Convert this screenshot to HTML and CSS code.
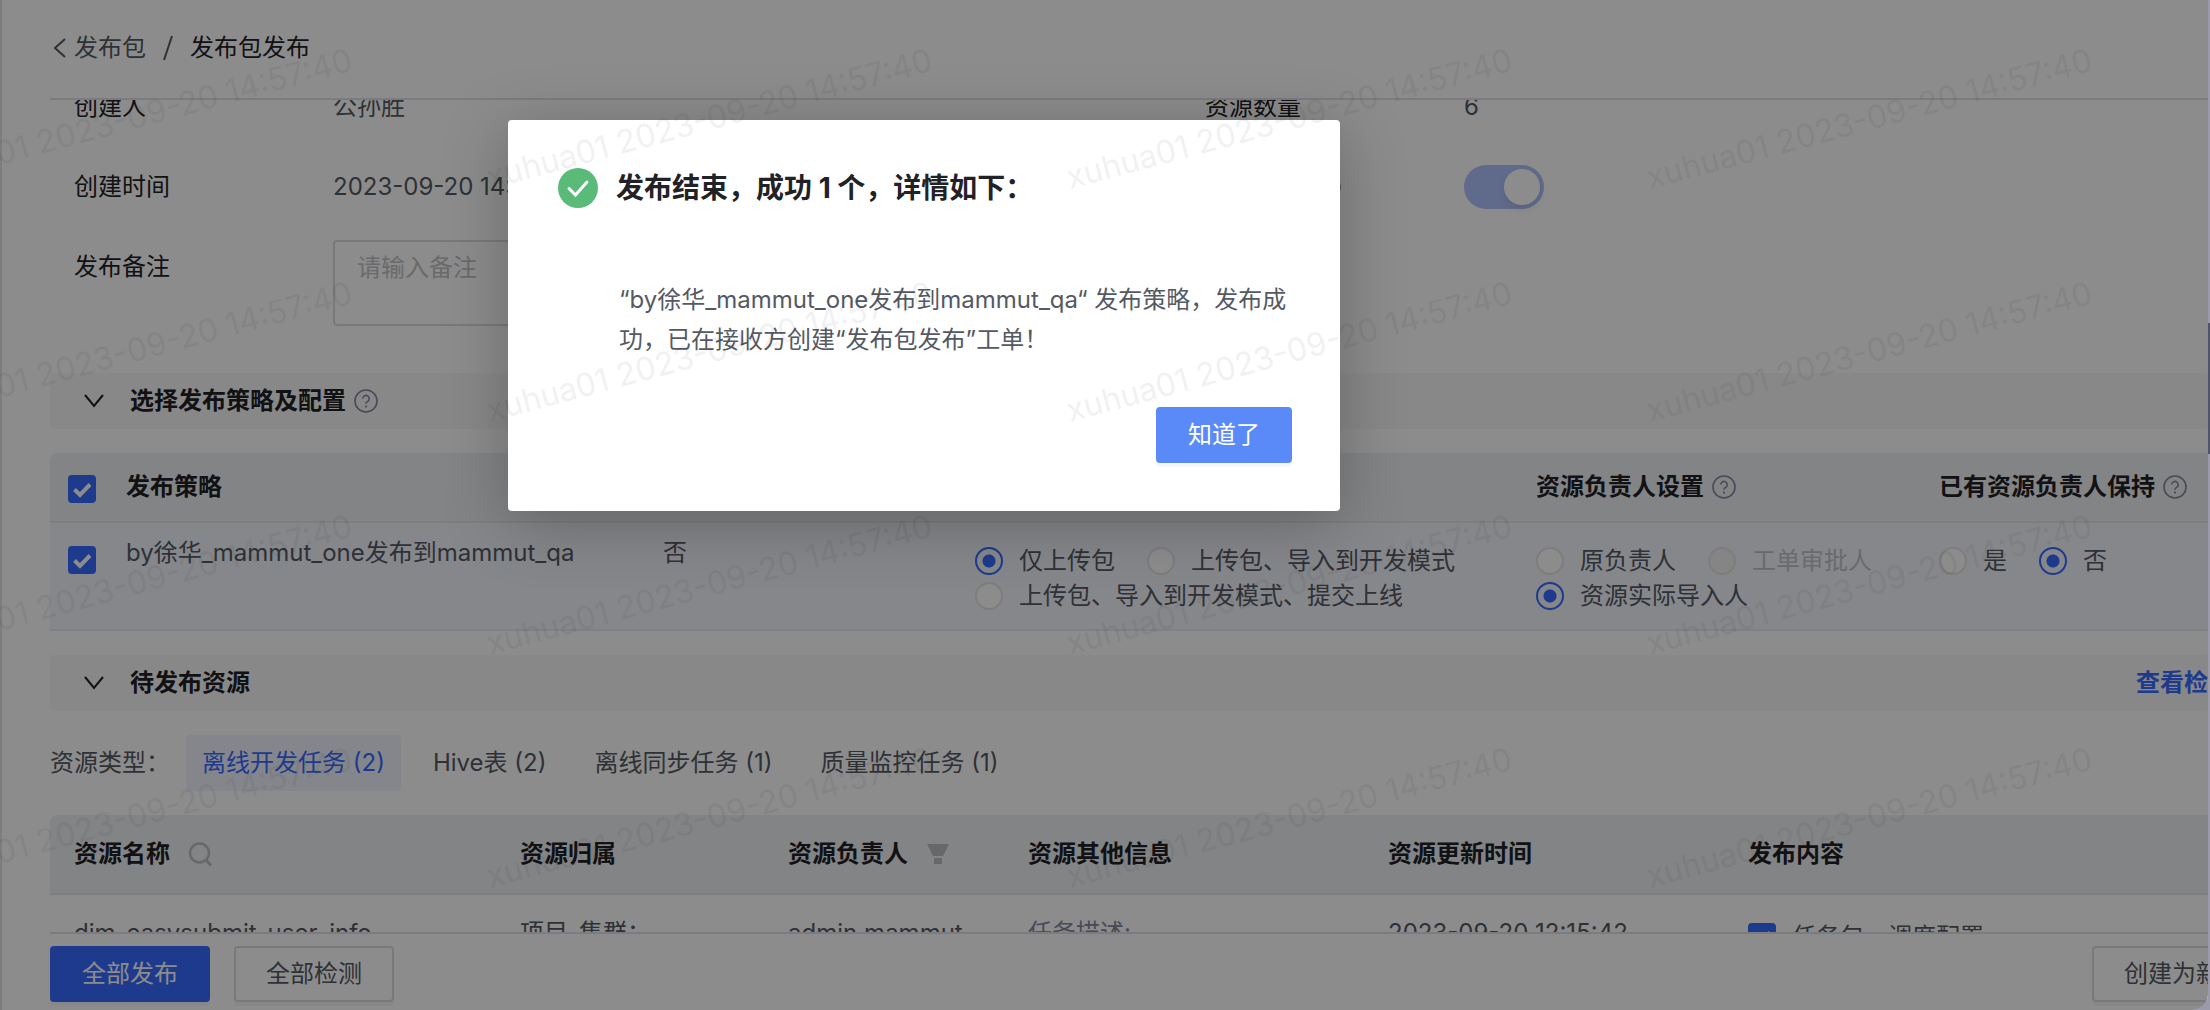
FILE: index.html
```
<!DOCTYPE html>
<html lang="zh-CN">
<head>
    <meta charset="UTF-8">
    <meta name="viewport" content="width=device-width, initial-scale=1.0">
    <title>发布包发布</title>
    <link rel="stylesheet" href="styles.css">
</head>
<body>
    <svg class="sprite" aria-hidden="true">
        <symbol id="help" viewBox="0 0 24 24">
            <circle cx="12" cy="12" r="11" fill="none" stroke="currentColor" stroke-width="1.6"/>
            <path d="M8.8 9.6a3.2 3.2 0 1 1 4.8 2.8c-1.1.6-1.6 1.1-1.6 2.4" fill="none" stroke="currentColor" stroke-width="1.6"/>
            <circle cx="12" cy="17.6" r="1.1" fill="currentColor"/>
        </symbol>
        <symbol id="chevron" viewBox="0 0 20 14">
            <path d="M1 1l9 11 9-11" fill="none" stroke="currentColor" stroke-width="2"/>
        </symbol>
    </svg>

    <div class="app">
        <header class="header">
            <nav class="breadcrumb">
                <a href="#" class="back">
                    <svg width="12" height="20" viewBox="0 0 12 20"><path d="M11 1L1 10l10 9" fill="none" stroke="currentColor" stroke-width="2"/></svg>
                    发布包
                </a>
                <svg class="slash" viewBox="0 0 12 26"><path d="M10 1L2 25" stroke="currentColor" stroke-width="2"/></svg>
                <span class="current">发布包发布</span>
            </nav>
        </header>

        <main class="content">
            <div class="scroll">
                <div class="info">
                    <span class="label">创建人</span>
                    <span class="value">公孙胜</span>
                    <span class="label">资源数量</span>
                    <span class="value">6</span>

                    <span class="label">创建时间</span>
                    <span class="value">2023-09-20 14:56:12</span>
                    <span class="label label-help"><svg class="help"><use href="#help"/></svg></span>
                    <span class="value"><input type="checkbox" class="switch" aria-label="开关" checked disabled></span>

                    <label class="label" for="remark">发布备注</label>
                    <textarea id="remark" class="remark" placeholder="请输入备注"></textarea>
                </div>

                <div class="section">
                    <svg class="chevron"><use href="#chevron"/></svg>
                    <h2>选择发布策略及配置</h2>
                    <svg class="help"><use href="#help"/></svg>
                </div>

                <table class="policy">
                    <colgroup>
                        <col class="p-check"><col class="p-name"><col class="p-flag"><col class="p-mode"><col class="p-owner"><col>
                    </colgroup>
                    <thead>
                        <tr>
                            <th><input type="checkbox" class="check" aria-label="全选" checked></th>
                            <th>发布策略</th>
                            <th></th>
                            <th></th>
                            <th><span class="th">资源负责人设置<svg class="help"><use href="#help"/></svg></span></th>
                            <th><span class="th">已有资源负责人保持<svg class="help"><use href="#help"/></svg></span></th>
                        </tr>
                    </thead>
                    <tbody>
                        <tr>
                            <td><input type="checkbox" class="check" aria-label="选择策略" checked></td>
                            <td class="text">by徐华_mammut_one发布到mammut_qa</td>
                            <td class="text">否</td>
                            <td>
                                <div class="radios">
                                    <label><input type="radio" name="mode" checked>仅上传包</label>
                                    <label><input type="radio" name="mode">上传包、导入到开发模式</label>
                                    <label><input type="radio" name="mode">上传包、导入到开发模式、提交上线</label>
                                </div>
                            </td>
                            <td>
                                <div class="radios">
                                    <label><input type="radio" name="owner">原负责人</label>
                                    <label class="disabled"><input type="radio" name="owner" disabled>工单审批人</label>
                                    <label><input type="radio" name="owner" checked>资源实际导入人</label>
                                </div>
                            </td>
                            <td>
                                <div class="radios">
                                    <label><input type="radio" name="keep">是</label>
                                    <label><input type="radio" name="keep" checked>否</label>
                                </div>
                            </td>
                        </tr>
                    </tbody>
                </table>

                <div class="section">
                    <svg class="chevron"><use href="#chevron"/></svg>
                    <h2>待发布资源</h2>
                    <a href="#" class="report">查看检</a>
                </div>

                <div class="types">
                    <span>资源类型：</span>
                    <button type="button" class="tab active">离线开发任务 (2)</button>
                    <button type="button" class="tab">Hive表 (2)</button>
                    <button type="button" class="tab">离线同步任务 (1)</button>
                    <button type="button" class="tab">质量监控任务 (1)</button>
                </div>

                <table class="resource">
                    <colgroup>
                        <col class="r-name"><col class="r-belong"><col class="r-owner"><col class="r-info"><col class="r-time"><col>
                    </colgroup>
                    <thead>
                        <tr>
                            <th><span class="th wide">资源名称
                                <svg class="search" viewBox="0 0 24 24"><circle cx="11.5" cy="11" r="9.5" fill="none" stroke="currentColor" stroke-width="2.4"/><path d="M18 18l5 5.5" stroke="currentColor" stroke-width="2.8"/></svg></span></th>
                            <th>资源归属</th>
                            <th><span class="th wide">资源负责人
                                <svg class="filter" viewBox="0 0 24 22"><path d="M1 1h22l-6 12H7zM8 15h8v6H8z" fill="currentColor"/></svg></span></th>
                            <th>资源其他信息</th>
                            <th>资源更新时间</th>
                            <th>发布内容</th>
                        </tr>
                    </thead>
                    <tbody>
                        <tr>
                            <td>dim_easysubmit_user_info</td>
                            <td>项目_集群：</td>
                            <td>admin.mammut</td>
                            <td class="muted">任务描述:</td>
                            <td>2023-09-20 12:15:42</td>
                            <td><label class="pick"><input type="checkbox" class="check" checked>任务包、调度配置</label></td>
                        </tr>
                    </tbody>
                </table>
            </div>
        </main>

        <footer class="footer">
            <button type="button" class="btn primary">全部发布</button>
            <button type="button" class="btn">全部检测</button>
            <button type="button" class="btn create">创建为新</button>
        </footer>

        <div class="mask"></div>

        <div class="modal" role="dialog" aria-labelledby="modal-title">
            <div class="modal-head">
                <svg width="40" height="40" viewBox="0 0 40 40"><circle cx="20" cy="20" r="20" fill="#5aba78"/><path d="M11 20.500l6.500 6.500 11.500-13" fill="none" stroke="#fff" stroke-width="3" stroke-linecap="round"/></svg>
                <h1 id="modal-title">发布结束，成功 1 个，详情如下：</h1>
            </div>
            <p class="modal-body">“by徐华_mammut_one发布到mammut_qa“ 发布策略，发布成功，已在接收方创建“发布包发布”工单！</p>
            <div class="modal-foot">
                <button type="button" class="btn ok">知道了</button>
            </div>
        </div>

        <svg class="watermark" aria-hidden="true">
            <pattern id="mark" x="-124" width="580" height="233" patternUnits="userSpaceOnUse">
                <text x="34" y="189" transform="rotate(-15 34 189)">xuhua01 2023-09-20 14:57:40</text>
            </pattern>
            <rect width="100%" height="100%" fill="url(#mark)"/>
        </svg>
    </div>
</body>
</html>
```
FILE: styles.css
```
* {
    box-sizing: border-box;
}

body {
    margin: 0;
    height: 100vh;
    padding-right: 2px;
    overflow: hidden;
    font-family: Inter, "Noto Sans CJK SC", sans-serif;
    font-size: 24px;
    line-height: 36px;
    color: #555963;
    background: linear-gradient(#9a9aac 0 32%, #50536a 32% 45%, #9a9aac 45%);
}

button, textarea {
    font: inherit;
    color: inherit;
}

a {
    text-decoration: none;
}

.sprite {
    display: none;
}

.app {
    position: relative;
    display: flex;
    flex-direction: column;
    height: 100%;
    overflow: hidden;
    padding-left: 2px;
    border-bottom-right-radius: 16px;
    background: #fff;
}

/* header */
.header {
    display: flex;
    height: 100px;
    margin-left: 48px;
    padding-bottom: 2px;
    border-bottom: 2px solid #e0e0ea;
}

.breadcrumb {
    display: flex;
    align-items: center;
    gap: 16px;
    padding-left: 4px;
}

.back {
    display: flex;
    align-items: center;
    gap: 8px;
    color: #555963;
}

.slash {
    width: 12px;
    height: 26px;
}

.current {
    color: #222226;
}

/* content */
.content {
    flex: 1;
    min-height: 0;
    overflow: hidden;
    padding-left: 48px;
}

.scroll {
    margin-top: -33px;
}

.info {
    display: grid;
    grid-template-columns: 259px 872px 259px 1fr;
    grid-auto-rows: minmax(80px, auto);
    padding-left: 24px;
}

.label, .value {
    display: flex;
    align-items: center;
    height: 80px;
}

.label {
    color: #222226;
}

.label-help {
    padding-left: 112px;
}

.remark {
    width: 800px;
    height: 86px;
    margin: 13px 0 47px;
    padding: 8px 22px;
    border: 2px solid #dcdcdf;
    border-radius: 4px;
    background: #fff;
    resize: none;
}

.remark::placeholder {
    color: #c2c2c6;
}

.switch {
    appearance: none;
    display: flex;
    justify-content: flex-end;
    width: 80px;
    height: 44px;
    margin: 0;
    padding: 4px;
    border-radius: 22px;
    background: #b0c4ff;
}

.switch::before {
    content: "";
    width: 36px;
    height: 36px;
    border-radius: 50%;
    background: #fff;
    box-shadow: 0 4px 8px rgba(0, 35, 11, 0.1);
}

.help {
    width: 24px;
    height: 24px;
    color: #85869e;
}

.section {
    display: flex;
    align-items: center;
    height: 56px;
    padding-left: 34px;
    border-radius: 4px;
    background: #f7f7f8;
}

.section h2 {
    margin: 0 8px 0 26px;
    font-size: 24px;
    color: #222226;
}

.chevron {
    width: 20px;
    height: 14px;
    color: #222226;
}

.report {
    margin-left: auto;
    font-weight: bold;
    color: #386aff;
}

/* tables */
table {
    width: 100%;
    table-layout: fixed;
    border-collapse: separate;
    border-spacing: 0;
}

th {
    text-align: left;
    font-weight: bold;
    color: #222226;
    background: #eff0f4;
    border-bottom: 2px solid #e3e5ea;
    padding: 0;
}

th:first-child {
    border-top-left-radius: 8px;
}

td {
    padding: 0;
    vertical-align: top;
}

.th {
    display: flex;
    align-items: center;
    gap: 8px;
}

.wide {
    gap: 18px;
}

.policy {
    margin: 24px 0;
}

.p-check { width: 76px; }
.p-name { width: 537px; }
.p-flag { width: 312px; }
.p-mode { width: 561px; }
.p-owner { width: 403px; }

.policy th {
    height: 70px;
}

.policy th:first-child, .policy td:first-child {
    padding-left: 18px;
}

.policy th .check {
    margin-top: 4px;
}

.policy td {
    height: 108px;
    padding-top: 20px;
    background: #f4f6fd;
    border-bottom: 2px solid #e8eaf4;
}

.policy td.text {
    padding-top: 12px;
}

.policy td .check {
    margin-top: 3px;
}

.check {
    appearance: none;
    display: block;
    flex: none;
    width: 28px;
    height: 28px;
    margin: 0;
    border-radius: 4px;
    background: #386aff url("data:image/svg+xml,%3Csvg xmlns='http://www.w3.org/2000/svg' viewBox='0 0 28 28'%3E%3Cpath d='M6.500 14.500l5.500 5.500 10-10.500' fill='none' stroke='white' stroke-width='4'/%3E%3C/svg%3E");
}

.radios {
    display: flex;
    flex-wrap: wrap;
    column-gap: 32px;
    line-height: 35px;
}

.radios label {
    display: flex;
    align-items: center;
    gap: 16px;
}

.radios input {
    appearance: none;
    width: 28px;
    height: 28px;
    margin: 0;
    border: 2px solid #e4e4e4;
    border-radius: 50%;
    background: #fff;
}

.radios input:checked {
    border-color: #386aff;
    background: radial-gradient(circle, #386aff 6px, #f4f6fd 7px);
}

.radios input:disabled {
    background: #f2f2f2;
}

.radios .disabled {
    color: #c2c2c6;
}

.types {
    display: flex;
    align-items: center;
    gap: 16px;
    margin: 24px 0;
}

.tab {
    height: 56px;
    padding: 0 16px;
    border: 0;
    border-radius: 4px;
    background: none;
}

.tab.active {
    color: #386aff;
    background: #f0f4ff;
}

.r-name { width: 446px; }
.r-belong { width: 268px; }
.r-owner { width: 240px; }
.r-info { width: 360px; }
.r-time { width: 360px; }

.resource th {
    height: 80px;
    padding-left: 24px;
}

.resource td {
    padding: 20px 0 20px 24px;
}

.resource .muted {
    color: #85869e;
}

.pick {
    display: flex;
    align-items: center;
    gap: 16px;
    line-height: 44px;
}

.search, .filter {
    width: 24px;
    height: 24px;
    color: #bcbdc2;
}

/* footer */
.footer {
    display: flex;
    gap: 24px;
    margin-left: 48px;
    padding: 12px 0 8px;
    border-top: 2px solid #e0e0ea;
}

.btn {
    height: 56px;
    padding: 0 30px;
    border: 2px solid #dcdcdf;
    border-radius: 4px;
    background: #fff;
    box-shadow: 0 4px 0 rgba(0, 0, 0, 0.03);
    white-space: nowrap;
}

.primary {
    border-color: #386aff;
    background: #386aff;
    color: #fff;
}

.create {
    margin-left: auto;
    margin-right: -44px;
}

/* dialog */
.mask {
    position: absolute;
    inset: 0;
    border-left: 2px solid rgba(0, 0, 0, 0.1);
    background: rgba(0, 0, 0, 0.45);
}

.modal {
    position: absolute;
    top: 120px;
    left: 508px;
    width: 832px;
    padding: 48px 48px 48px 50px;
    border-radius: 4px;
    background: #fff;
    box-shadow: 0 12px 64px rgba(0, 0, 0, 0.25);
}

.modal-head {
    display: flex;
    align-items: center;
    gap: 18px;
}

.modal-head h1 {
    margin: 0;
    font-size: 28px;
    line-height: 40px;
    color: #222226;
}

.modal-body {
    margin: 72px 0 47px;
    padding-left: 61px;
    line-height: 40px;
}

.modal-foot {
    display: flex;
    justify-content: flex-end;
}

.ok {
    border-color: #5a8af8;
    background: #5a8af8;
    color: #fff;
}

.watermark {
    position: absolute;
    top: 0;
    left: 0;
    width: 100%;
    height: 932px;
    font-size: 32px;
    fill: rgba(0, 0, 0, 0.055);
    pointer-events: none;
}
```
